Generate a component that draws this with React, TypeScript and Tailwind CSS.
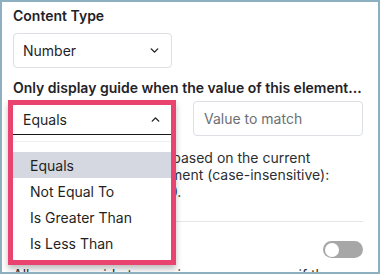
import { ChevronDown, ChevronUp } from "lucide-react";

const opcoes = ["Equals", "Not Equal To", "Is Greater Than", "Is Less Than"];

function Toggle() {
  return (
    <div className="flex h-[17px] w-[40px] items-center rounded-full bg-[#a7a7a7] px-[2px]">
      <div className="h-[14px] w-[14px] rounded-full bg-white" />
    </div>
  );
}

function MatchSelect() {
  return (
    <div className="relative h-[35px] w-[159px]">
      <div className="absolute -left-[5px] -top-[1px] z-10 w-[168px] border-[5px] border-[#e8446f] bg-white shadow-[0_4px_6px_rgba(0,0,0,0.25)]">
        <div className="flex h-[30px] items-center justify-between border-b-[1.5px] border-[#1a1a1a] pl-[10px] pr-[9px] text-[14px] text-[#1f1f1f]">
          <span>Equals</span>
          <ChevronUp size={13} strokeWidth={2.6} />
        </div>
        <div className="mt-[6px] border-t border-[#eeeff2] pb-[4px] pt-[10px]">
          {opcoes.map((o, i) => (
            <div
              key={o}
              className={`flex h-[26px] items-center pl-[17px] text-[14px] text-[#1f1f1f] ${
                i === 0 ? "bg-[#d5d8e0]" : ""
              }`}
            >
              {o}
            </div>
          ))}
        </div>
      </div>
    </div>
  );
}

export default function App() {
  return (
    <div className="h-[274px] w-[380px] overflow-hidden border-2 border-[#8db0c0] bg-white font-['Inter',sans-serif] text-[#1f2328]">
      <div className="pl-[11px] pr-[15px] pt-[5px]">
        <p className="text-[14px] font-semibold leading-[18px]">Content Type</p>
        <div className="mt-[8px] flex h-[35px] w-[159px] items-center justify-between rounded-[4px] border border-[#dcdfe4] pl-[9px] pr-[10px] text-[14px]">
          <span>Number</span>
          <ChevronDown size={13} strokeWidth={2.6} />
        </div>

        <p className="mt-[11px] text-[14px] font-semibold leading-[18px]">
          Only display guide when the value of this element...
        </p>

        <div className="mt-[4px] flex gap-[21px]">
          <MatchSelect />
          <div className="flex h-[35px] w-[170px] items-center rounded-[4px] border border-[#dcdfe4] pl-[10px] text-[14px] text-[#6b7075]">
            Value to match
          </div>
        </div>

        <p className="mt-[13px] text-[14px] leading-[17px] text-[#2b2f33]">
          Show or hide this guide based on the current
          <br />
          value entered in this element (case-insensitive):
          <br />
          For example: 1, 25 or 100.
        </p>

        <div className="mt-[21px] border-t border-[#e3e5e8]" />

        <div className="mt-[17px] flex items-center justify-between">
          <span className="text-[14px] font-semibold">Keep guide open</span>
          <Toggle />
        </div>

        <p className="mt-[6px] text-[14px] leading-[17px] text-[#2b2f33]">
          Allow your guide to remain on screen even if the
        </p>
      </div>
    </div>
  );
}
